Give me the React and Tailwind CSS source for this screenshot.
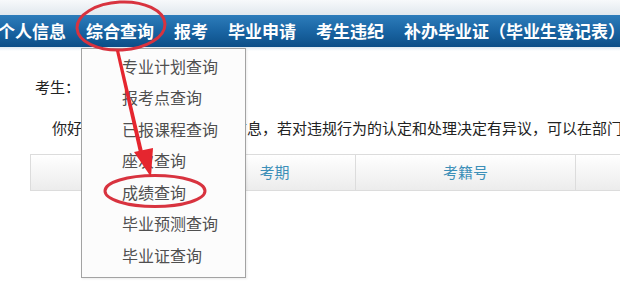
import React from 'react';

const FONT = { fontFamily: '"Noto Sans CJK SC", "Noto Sans", sans-serif' };

const NAV_ITEMS = ['个人信息', '综合查询', '报考', '毕业申请', '考生违纪', '补办毕业证（毕业生登记表）'];
const MENU_ITEMS = ['专业计划查询', '报考点查询', '已报课程查询', '座次查询', '成绩查询', '毕业预测查询', '毕业证查询'];

const Annotations = () => (
  <svg className="pointer-events-none absolute left-0 top-0" width="620" height="301" viewBox="0 0 620 301">
    <ellipse cx="121" cy="26" rx="44" ry="24" fill="none" stroke="#d8333f" strokeWidth="3" transform="rotate(-3 121 26)" />
    <ellipse cx="155" cy="191" rx="50" ry="15.5" fill="none" stroke="#d8333f" strokeWidth="3" />
    <polygon points="116,51 119,50 144,156 140,157" fill="#e5262f" />
    <polygon points="134,152 153,148 151,177" fill="#e5262f" />
  </svg>
);

export default function App() {
  return (
    <div className="relative h-[301px] w-[620px] overflow-hidden bg-white" style={FONT}>
      <div className="h-[15px] bg-gradient-to-b from-[#f7f9fb] to-[#e1e8ee]" />
      <nav className="flex h-[32px] items-center gap-[20px] overflow-hidden whitespace-nowrap bg-gradient-to-b from-[#2d7dbb] via-[#1a65a3] to-[#0c4e87] text-[17px] font-bold text-white">
        {NAV_ITEMS.map((item, i) => (
          <span key={item} className={i === 0 ? '-ml-[2px]' : ''}>{item}</span>
        ))}
      </nav>
      <div className="h-[4px] bg-gradient-to-b from-[#dfe9f1] to-white" />

      <div className="pl-[35px] pt-[25px] text-[15px] text-[#222]">考生：</div>
      <div className="whitespace-nowrap pl-[52px] pt-[18px] text-[15px] text-[#222]">
        你好，以下是你的违纪处理信息，若对违规行为的认定和处理决定有异议，可以在部门规定时间内提出申诉。
      </div>

      <div className="ml-[30px] mt-[15px] flex h-[37px] w-[800px] border border-[#dcdcdc] bg-gradient-to-b from-white to-[#ececec] text-[15px] text-[#3c8fb8]">
        <div className="flex w-[163px] items-center justify-center border-r border-[#dcdcdc]">序号</div>
        <div className="flex w-[162px] items-center justify-center border-r border-[#dcdcdc]">考期</div>
        <div className="flex w-[220px] items-center justify-center border-r border-[#dcdcdc]">考籍号</div>
        <div className="flex flex-1 items-center justify-center">成绩</div>
      </div>

      <div className="absolute left-[81px] top-[48px] w-[165px] border border-[#a3a3a3] bg-[#fcfcfc] pb-[6px] pt-[1px] shadow-[1px_1px_2px_rgba(0,0,0,0.08)]">
        {MENU_ITEMS.map((item) => (
          <div key={item} className="flex h-[31.5px] items-center pl-[40px] text-[16px] text-[#505050]">
            {item}
          </div>
        ))}
      </div>

      <Annotations />
    </div>
  );
}
